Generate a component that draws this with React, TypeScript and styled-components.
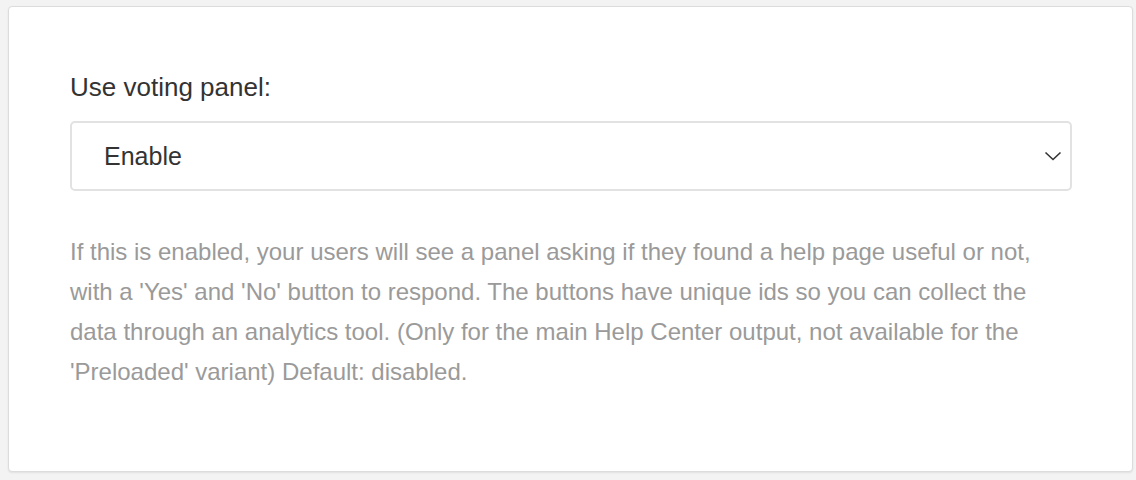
import React from "react";
import styled, { createGlobalStyle } from "styled-components";

const Global = createGlobalStyle`
  html, body { margin: 0; padding: 0; background: #f3f3f3; }
  body { font-family: "Liberation Sans", Arial, Helvetica, sans-serif; }
`;

const Page = styled.div`
  padding: 6px 3px 8px 8px;
`;

const Card = styled.section`
  background: #fff;
  border: 1px solid #dcdcdc;
  border-radius: 4px;
  box-shadow: 0 1px 2px rgba(0, 0, 0, 0.08);
  padding: 65px 60px 80px 61px;
  height: 466px;
  box-sizing: border-box;
`;

const Label = styled.div`
  font-size: 26px;
  line-height: 30px;
  color: #333;
  margin-bottom: 19px;
`;

const SelectBox = styled.div`
  height: 70px;
  box-sizing: border-box;
  border: 2px solid #e2e2e2;
  border-radius: 5px;
  display: flex;
  align-items: center;
  justify-content: space-between;
  padding: 0 8px 0 32px;
  font-size: 25px;
  color: #333;
`;

const Chevron = styled.svg`
  width: 18px;
  height: 12px;
`;

const Help = styled.p`
  margin: 41px 0 0;
  font-size: 24px;
  line-height: 40px;
  color: #9a9a9a;
`;

export default function App() {
  return (
    <>
      <Global />
      <Page>
        <Card>
          <Label>Use voting panel:</Label>
          <SelectBox>
            <span>Enable</span>
            <Chevron viewBox="0 0 18 12">
              <path d="M1.5 2.5 L9 9.5 L16.5 2.5" fill="none" stroke="#333" strokeWidth="1.6" />
            </Chevron>
          </SelectBox>
          <Help>
            If this is enabled, your users will see a panel asking if they found a help page useful or not,
            with a 'Yes' and 'No' button to respond. The buttons have unique ids so you can collect the
            data through an analytics tool. (Only for the main Help Center output, not available for the
            'Preloaded' variant) Default: disabled.
          </Help>
        </Card>
      </Page>
    </>
  );
}
